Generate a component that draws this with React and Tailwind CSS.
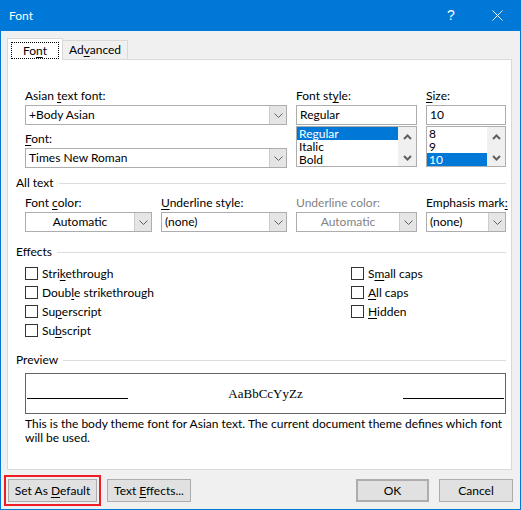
import React from 'react';

// access-key underline
const U = ({ children }) => <span className="underline decoration-1 underline-offset-2">{children}</span>;

const Chevron = () => (
  <svg width="9" height="5" viewBox="0 0 9 5" className="block">
    <path d="M0.5 0.5L4.5 4.5L8.5 0.5" fill="none" stroke="#606060" strokeWidth="1" />
  </svg>
);

const ScrollArrow = ({ up }) => (
  <svg width="9" height="6" viewBox="0 0 9 6" className="block">
    <path d={up ? 'M1 5L4.5 1.5L8 5' : 'M1 1L4.5 4.5L8 1'} fill="none" stroke="#606060" strokeWidth="2" />
  </svg>
);

const Label = ({ children, className = '' }) => (
  <div className={`h-[16px] leading-[16px] whitespace-nowrap ${className}`}>{children}</div>
);

const TextBox = ({ value, className = '' }) => (
  <div className={`h-[20px] border border-[#adadad] bg-white px-[3px] leading-[18px] ${className}`}>{value}</div>
);

const Combo = ({ value, className = '', center = false, disabled = false }) => (
  <div className={`flex h-[20px] border border-[#adadad] bg-white ${className}`}>
    <div
      className={`flex-1 flex items-center px-[3px] leading-[18px] whitespace-nowrap ${center ? 'justify-center' : ''} ${
        disabled ? 'text-[#838383]' : ''
      }`}
    >
      <span>{value}</span>
    </div>
    <div className="w-[17px] flex items-center justify-center bg-[#e5e5e5] border-l border-[#cccccc]">
      <Chevron />
    </div>
  </div>
);

const ListBox = ({ items, selected, className = '' }) => (
  <div className={`flex h-[41px] border border-[#adadad] bg-white ${className}`}>
    <div className="flex-1 flex flex-col">
      {items.map((item) => (
        <div
          key={item}
          className={`h-[13px] leading-[13px] pl-[2px] ${item === selected ? 'bg-[#0078d7] text-white' : ''}`}
        >
          {item}
        </div>
      ))}
    </div>
    <div className="w-[18px] bg-[#f0f0f0] flex flex-col items-center justify-between pt-[7px] pb-[5px]">
      <ScrollArrow up />
      <ScrollArrow />
    </div>
  </div>
);

const Check = ({ children }) => (
  <div className="flex h-[19px] items-center">
    <div className="w-[13px] h-[13px] border border-[#333333] bg-white" />
    <span className="ml-[4px] leading-[16px]">{children}</span>
  </div>
);

const Group = ({ title }) => (
  <div className="flex items-center h-[16px] pl-[8px] pr-[5px]">
    <span className="leading-[16px]">{title}</span>
    <div className="ml-[5px] flex-1 h-px bg-[#dcdcdc]" />
  </div>
);

const Btn = ({ children, className = '' }) => (
  <div className={`h-[23px] flex items-center justify-center bg-[#e1e1e1] border border-[#adadad] ${className}`}>
    <span>{children}</span>
  </div>
);

const App = () => {
  return (
    <div className="w-[521px] h-[510px] flex flex-col bg-[#f0f0f0] border-x border-b border-[#0078d7] font-['Lato',sans-serif] text-[12px] text-black overflow-hidden">
      {/* Title bar */}
      <div className="h-[31px] shrink-0 flex items-center bg-[#0078d7] text-white">
        <div className="pl-[8px] flex-1 leading-[16px]">Font</div>
        <div className="w-[46px] h-full flex items-center justify-center text-[14px] font-['Liberation_Sans',sans-serif]">?</div>
        <div className="w-[46px] h-full flex items-center justify-center">
          <svg width="11" height="11" viewBox="0 0 11 11" className="block">
            <path d="M0.5 0.5L10.5 10.5M10.5 0.5L0.5 10.5" stroke="#ffffff" strokeWidth="1" />
          </svg>
        </div>
      </div>

      {/* Tabs */}
      <div className="mt-[7px] ml-[6px] flex items-end h-[21px]">
        <div className="relative z-10 -mb-px w-[56px] h-[22px] bg-white border-x border-t border-[#d9d9d9] px-[3px] pt-[3px]">
          <div className="h-[17px] border border-dotted border-black flex items-center justify-center leading-[15px]">
            <span>
              Fo<U>n</U>t
            </span>
          </div>
        </div>
        <div className="w-[65px] h-[19px] bg-[#f0f0f0] border-t border-r border-[#d9d9d9] flex items-center justify-center leading-[16px]">
          <span>
            Ad<U>v</U>anced
          </span>
        </div>
      </div>

      {/* Panel */}
      <div className="ml-[6px] w-[505px] h-[411px] bg-white border border-[#d9d9d9] pt-[28px] flex flex-col">
        <div className="flex items-start gap-[9px] pl-[17px] pr-[5px]">
          <div className="w-[262px] flex flex-col">
            <Label>
              Asian <U>t</U>ext font:
            </Label>
            <Combo value="+Body Asian" className="mt-px" />
            <Label className="mt-[6px]">
              <U>F</U>ont:
            </Label>
            <Combo value="Times New Roman" className="mt-px" />
          </div>
          <div className="w-[121px] flex flex-col">
            <Label>
              Font st<U>y</U>le:
            </Label>
            <TextBox value="Regular" className="mt-px" />
            <ListBox items={['Regular', 'Italic', 'Bold']} selected="Regular" className="mt-px" />
          </div>
          <div className="w-[80px] flex flex-col">
            <Label>
              <U>S</U>ize:
            </Label>
            <TextBox value="10" className="mt-px" />
            <ListBox items={['8', '9', '10']} selected="10" className="mt-px" />
          </div>
        </div>

        {/* All text */}
        <div className="mt-[7px]">
          <Group title="All text" />
        </div>
        <div className="mt-[4px] flex items-start gap-[9px] pl-[17px] pr-[5px]">
          <div className="w-[127px] flex flex-col">
            <Label>
              Font <U>c</U>olor:
            </Label>
            <Combo value="Automatic" center className="mt-px" />
          </div>
          <div className="w-[126px] flex flex-col">
            <Label>
              <U>U</U>nderline style:
            </Label>
            <Combo value="(none)" className="mt-px" />
          </div>
          <div className="w-[121px] flex flex-col">
            <Label className="text-[#838383]">Underline color:</Label>
            <Combo value="Automatic" center disabled className="mt-px" />
          </div>
          <div className="w-[80px] flex flex-col">
            <Label>
              Emphasis mark<U>:</U>
            </Label>
            <Combo value="(none)" className="mt-px" />
          </div>
        </div>

        {/* Effects */}
        <div className="mt-[12px]">
          <Group title="Effects" />
        </div>
        <div className="mt-[4px] flex pl-[17px]">
          <div className="w-[326px] flex flex-col">
            <Check>
              Stri<U>k</U>ethrough
            </Check>
            <Check>
              Doub<U>l</U>e strikethrough
            </Check>
            <Check>
              Su<U>p</U>erscript
            </Check>
            <Check>
              Su<U>b</U>script
            </Check>
          </div>
          <div className="flex flex-col">
            <Check>
              S<U>m</U>all caps
            </Check>
            <Check>
              <U>A</U>ll caps
            </Check>
            <Check>
              <U>H</U>idden
            </Check>
          </div>
        </div>

        {/* Preview */}
        <div className="mt-[12px]">
          <Group title="Preview" />
        </div>
        <div className="mt-[5px] ml-[17px] w-[481px] h-[41px] border border-[#646464] flex">
          <div className="ml-px w-[101px] h-[25px] border-b border-black" />
          <div className="flex-1 text-center pt-[12px] leading-[15px] text-[13px] font-['Liberation_Serif',serif]">
            AaBbCcYyZz
          </div>
          <div className="mr-px w-[101px] h-[25px] border-b border-black" />
        </div>
        <div className="mt-[3px] pl-[17px] pr-[8px] leading-[14px]">
          This is the body theme font for Asian text. The current document theme defines which font will be used.
        </div>
      </div>

      {/* Buttons */}
      <div className="mt-[5px] flex items-center pl-[3px] pr-[7px]">
        <div className="border-2 border-[#ee1c25] p-[2px]">
          <Btn className="w-[89px]">
            Set As <U>D</U>efault
          </Btn>
        </div>
        <Btn className="ml-[6px] w-[84px]">
          Text <U>E</U>ffects...
        </Btn>
        <div className="flex-1" />
        <Btn className="w-[73px] border-2 border-[#0078d7]">OK</Btn>
        <Btn className="ml-[10px] w-[74px]">Cancel</Btn>
      </div>
    </div>
  );
};

export default App;
